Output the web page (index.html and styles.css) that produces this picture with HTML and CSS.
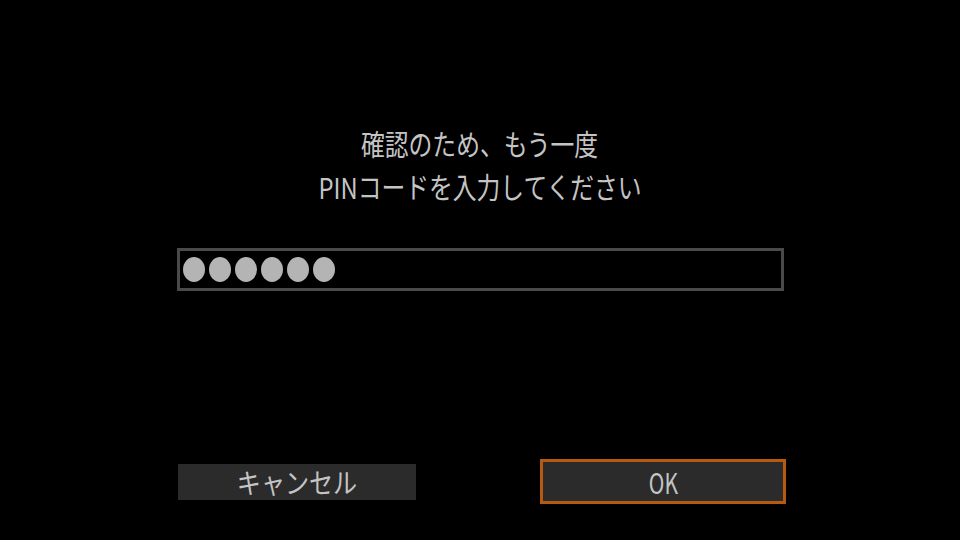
FILE: index.html
```html
<!DOCTYPE html>
<html lang="ja">
<head>
<meta charset="utf-8">
<link rel="stylesheet" href="styles.css">
</head>
<body>
<div class="screen">
  <div class="message">
    <div class="line">確認のため、もう一度</div>
    <div class="line">PINコードを入力してください</div>
  </div>
  <div class="pin-field">
    <span class="dot"></span><span class="dot"></span><span class="dot"></span><span class="dot"></span><span class="dot"></span><span class="dot"></span>
  </div>
  <div class="buttons">
    <div class="btn cancel"><span class="label">キャンセル</span></div>
    <div class="btn ok"><span class="label">OK</span></div>
  </div>
</div>
</body>
</html>
```
FILE: styles.css
```css
html, body {
  margin: 0;
  padding: 0;
  background: #000;
}
.screen {
  width: 960px;
  height: 540px;
  display: flex;
  flex-direction: column;
  align-items: center;
  font-family: "Noto Sans CJK JP", "Noto Sans", sans-serif;
  color: #c4c4c4;
}
.message {
  margin-top: 122px;
  display: flex;
  flex-direction: column;
  align-items: center;
}
.line {
  font-size: 29px;
  line-height: 43px;
  transform: scaleX(0.82);
  white-space: nowrap;
}
.pin-field {
  margin-top: 40px;
  width: 598px;
  height: 37px;
  border: 3px solid #4a4a4a;
  display: flex;
  align-items: center;
  gap: 4px;
  padding-left: 3px;
}
.dot {
  width: 22px;
  height: 25px;
  border-radius: 50%;
  background: #b4b4b4;
}
.buttons {
  margin-top: 168px;
  width: 608px;
  margin-left: 4px;
  display: flex;
  justify-content: space-between;
  align-items: center;
}
.btn {
  background: #2b2b2b;
  display: flex;
  align-items: center;
  justify-content: center;
  font-size: 28px;
}
.cancel {
  width: 238px;
  height: 36px;
}
.ok {
  width: 240px;
  height: 39px;
  border: 3px solid #b75a10;
}
.label {
  transform: scaleX(0.86);
  white-space: nowrap;
}
.ok .label {
  transform: scaleX(0.75);
}
```
